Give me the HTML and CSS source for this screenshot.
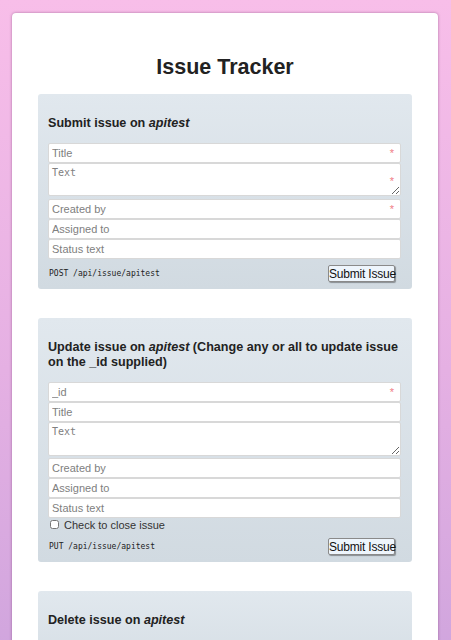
FILE: index.html
```html
<!DOCTYPE html>
<html>
<head>
<meta charset="utf-8">
<link rel="stylesheet" href="styles.css">
</head>
<body>
<div class="card">
  <h1 class="title">Issue Tracker</h1>

  <section class="panel">
    <h3 class="panel-head">Submit issue on <i>apitest</i></h3>
    <div class="field req"><input class="inp" placeholder="Title"></div>
    <div class="field req req-ta"><textarea class="ta" placeholder="Text"></textarea></div>
    <div class="field req gap-top"><input class="inp" placeholder="Created by"></div>
    <div class="field"><input class="inp" placeholder="Assigned to"></div>
    <div class="field"><input class="inp" placeholder="Status text"></div>
    <div class="foot">
      <code class="route">POST /api/issue/apitest</code>
      <button class="btn">Submit Issue</button>
    </div>
  </section>

  <section class="panel panel-2">
    <h3 class="panel-head">Update issue on <i>apitest</i> (Change any or all to update issue on the _id supplied)</h3>
    <div class="field req"><input class="inp" placeholder="_id"></div>
    <div class="field"><input class="inp" placeholder="Title"></div>
    <div class="field"><textarea class="ta" placeholder="Text"></textarea></div>
    <div class="field gap-top"><input class="inp" placeholder="Created by"></div>
    <div class="field"><input class="inp" placeholder="Assigned to"></div>
    <div class="field"><input class="inp" placeholder="Status text"></div>
    <label class="check"><input type="checkbox" class="cb"> Check to close issue</label>
    <div class="foot foot-2">
      <code class="route">PUT /api/issue/apitest</code>
      <button class="btn">Submit Issue</button>
    </div>
  </section>

  <section class="panel panel-3">
    <h3 class="panel-head">Delete issue on <i>apitest</i></h3>
  </section>
</div>
</body>
</html>
```
FILE: styles.css
```css
html, body {
  margin: 0;
  padding: 0;
}
body {
  min-height: 640px;
  background: linear-gradient(180deg, #f8bee9 0%, #e5b0e3 50%, #caa2dc 100%);
  font-family: "Liberation Sans", Arial, sans-serif;
  color: #222;
  overflow: hidden;
}
.card {
  margin: 13px 12px 0 12px;
  width: 426px;
  box-sizing: border-box;
  background: #fff;
  border-radius: 4px;
  box-shadow: 0 0 3px rgba(120, 60, 110, 0.6);
  padding: 41px 26px 40px 26px;
  min-height: 700px;
}
.title {
  margin: 0 0 14px 0;
  font-size: 21.5px;
  line-height: 26px;
  text-align: center;
  font-weight: bold;
  color: #222;
}
.panel {
  background: linear-gradient(180deg, #e1e8ee 0%, #d1dae1 100%);
  border-radius: 3px;
  padding: 22px 11px 7px 10px;
}
.panel-2 {
  margin-top: 29px;
}
.panel-3 {
  margin-top: 29px;
  min-height: 80px;
}
.panel-head {
  margin: 0 0 12px 0;
  font-size: 12.6px;
  line-height: 15px;
  font-weight: bold;
  color: #222;
}
.field {
  position: relative;
  display: flex;
}
.gap-top {
  margin-top: 3px;
}
.panel-2 .gap-top {
  margin-top: 2px;
}
.inp {
  display: block;
  width: 100%;
  height: 20px;
  box-sizing: border-box;
  margin: 0;
  border: 1px solid #d8d8d8;
  border-radius: 2px;
  background: #fff;
  padding: 1px 3px;
  font-family: "Liberation Sans", Arial, sans-serif;
  font-size: 11px;
  color: #333;
}
.inp::placeholder {
  color: #808080;
}
.ta {
  display: block;
  width: 100%;
  height: 33px;
  box-sizing: border-box;
  margin: 0;
  border: 1px solid #d8d8d8;
  border-radius: 2px;
  background: #fff;
  padding: 3px 3px;
  font-family: "DejaVu Sans Mono", "Liberation Mono", monospace;
  font-size: 10px;
  resize: vertical;
}
.panel-2 .ta {
  height: 34px;
}
.ta::placeholder {
  color: #808080;
}
.req::after {
  content: "*";
  position: absolute;
  right: 7px;
  top: 5px;
  color: #f07d86;
  font-size: 11px;
  line-height: 11px;
  pointer-events: none;
}
.req-ta::after {
  top: 13px;
}
.foot {
  display: flex;
  justify-content: space-between;
  align-items: center;
  padding: 6px 6px 0 1px;
}
.foot-2 {
  padding-top: 7px;
}
.route {
  font-family: "DejaVu Sans Mono", "Liberation Mono", monospace;
  font-size: 8px;
  color: #222;
}
.btn {
  height: 17px;
  width: 67px;
  padding: 0;
  font-family: "Liberation Sans", Arial, sans-serif;
  font-size: 12px;
  letter-spacing: -0.2px;
  white-space: nowrap;
  color: #111;
  background: #eef5fc;
  border: 1px solid #8a8a8a;
  border-radius: 2px;
  box-shadow: 1px 1px 1px rgba(0, 0, 0, 0.35);
}
.check {
  display: flex;
  align-items: center;
  gap: 5px;
  font-size: 11px;
  color: #333;
  height: 13px;
  margin-top: 0;
  padding-left: 2px;
}
.cb {
  margin: 0;
  width: 9px;
  height: 9px;
}
```
